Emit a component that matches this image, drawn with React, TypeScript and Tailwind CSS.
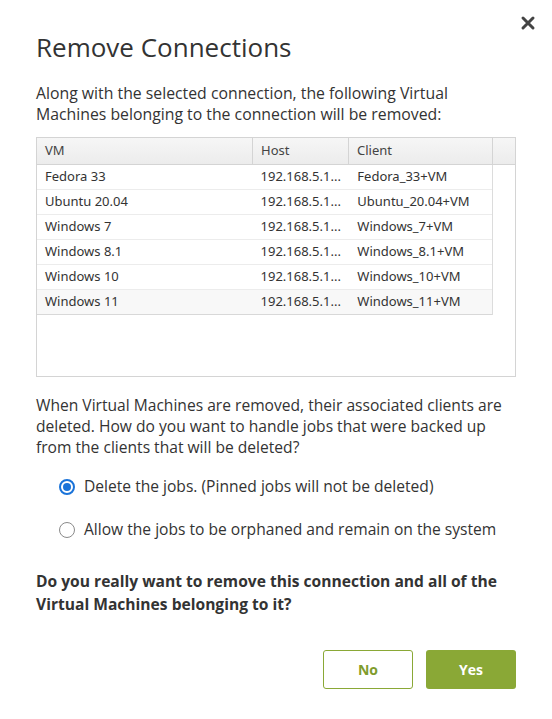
import { useState } from "react";

const VMS = [
  { vm: "Fedora 33", host: "192.168.5.1...", client: "Fedora_33+VM" },
  { vm: "Ubuntu 20.04", host: "192.168.5.1...", client: "Ubuntu_20.04+VM" },
  { vm: "Windows 7", host: "192.168.5.1...", client: "Windows_7+VM" },
  { vm: "Windows 8.1", host: "192.168.5.1...", client: "Windows_8.1+VM" },
  { vm: "Windows 10", host: "192.168.5.1...", client: "Windows_10+VM" },
  { vm: "Windows 11", host: "192.168.5.1...", client: "Windows_11+VM" },
];

function Radio({ checked, label, onClick }: { checked: boolean; label: string; onClick: () => void }) {
  return (
    <button onClick={onClick} className="flex items-center gap-[9px] text-left">
      <span
        className={`flex items-center justify-center w-[16px] h-[16px] rounded-full ${
          checked ? "border-2 border-[#1a73d9]" : "border-[1.5px] border-[#8a8a8a]"
        }`}
      >
        {checked && <span className="w-[8px] h-[8px] rounded-full bg-[#1a73d9]" />}
      </span>
      <span>{label}</span>
    </button>
  );
}

export default function App() {
  const [mode, setMode] = useState<"delete" | "orphan">("delete");

  return (
    <div
      className="relative w-[552px] h-[719px] bg-white text-[#333] px-9 pt-[30px]"
      style={{ fontFamily: '"Open Sans", "Noto Sans", sans-serif' }}
    >
      <button className="absolute right-[16px] top-[15px] text-[#444]">
        <svg width="16" height="16" viewBox="0 0 16 16">
          <path d="M3 3 L13 13 M13 3 L3 13" stroke="currentColor" strokeWidth="3" strokeLinecap="round" />
        </svg>
      </button>

      <h1 className="text-[26px] leading-[34px] text-[#333]">Remove Connections</h1>

      <p className="mt-[19px] max-w-[440px] text-[15.8px] leading-[21px]">
        Along with the selected connection, the following Virtual Machines belonging to the connection will be removed:
      </p>

      <div
        className="mt-[12px] h-[240px] border border-[#d4d4d4]"
        style={{ fontFamily: '"Noto Sans", sans-serif' }}
      >
        <div className="flex h-[27px] border-b border-[#d4d4d4] bg-gradient-to-b from-[#f6f6f6] to-[#ececec] text-[13px] text-[#444]">
          <div className="w-[216px] pl-[8px] flex items-center border-r border-[#d4d4d4]">VM</div>
          <div className="w-[96px] pl-[8px] flex items-center border-r border-[#d4d4d4]">Host</div>
          <div className="w-[144px] pl-[8px] flex items-center border-r border-[#d4d4d4]">Client</div>
          <div className="flex-1" />
        </div>
        <div className="w-[456px] border-r border-[#dcdcdc]">
          {VMS.map((r, i) => (
            <div
              key={r.vm}
              className={`flex h-[25px] items-center text-[13px] text-[#333] border-b ${
                i === VMS.length - 1 ? "border-[#d8d8d8] bg-[#f8f8f8]" : "border-[#ececec] bg-white"
              }`}
            >
              <div className="w-[216px] pl-[8px]">{r.vm}</div>
              <div className="w-[96px] pl-[8px]">{r.host}</div>
              <div className="w-[144px] pl-[9px]">{r.client}</div>
            </div>
          ))}
        </div>
      </div>

      <p className="mt-[18px] text-[15.6px] leading-[21px]">
        When Virtual Machines are removed, their associated clients are deleted. How do you want to handle jobs that were
        backed up from the clients that will be deleted?
      </p>

      <div className="mt-[18px] pl-[23px] flex flex-col gap-[22px] text-[15.6px] leading-[21px]">
        <Radio checked={mode === "delete"} label="Delete the jobs. (Pinned jobs will not be deleted)" onClick={() => setMode("delete")} />
        <Radio checked={mode === "orphan"} label="Allow the jobs to be orphaned and remain on the system" onClick={() => setMode("orphan")} />
      </div>

      <p className="mt-[30px] text-[15.6px] leading-[23px] font-bold">
        Do you really want to remove this connection and all of the Virtual Machines belonging to it?
      </p>

      <div className="mt-[34px] flex justify-end gap-[13px]">
        <button className="w-[90px] h-[39px] rounded-[3px] border border-[#8aa836] text-[#7f9c2c] text-[14px] font-bold bg-white">
          No
        </button>
        <button className="w-[90px] h-[39px] rounded-[3px] bg-[#8aa836] text-white text-[14px] font-bold">Yes</button>
      </div>
    </div>
  );
}
